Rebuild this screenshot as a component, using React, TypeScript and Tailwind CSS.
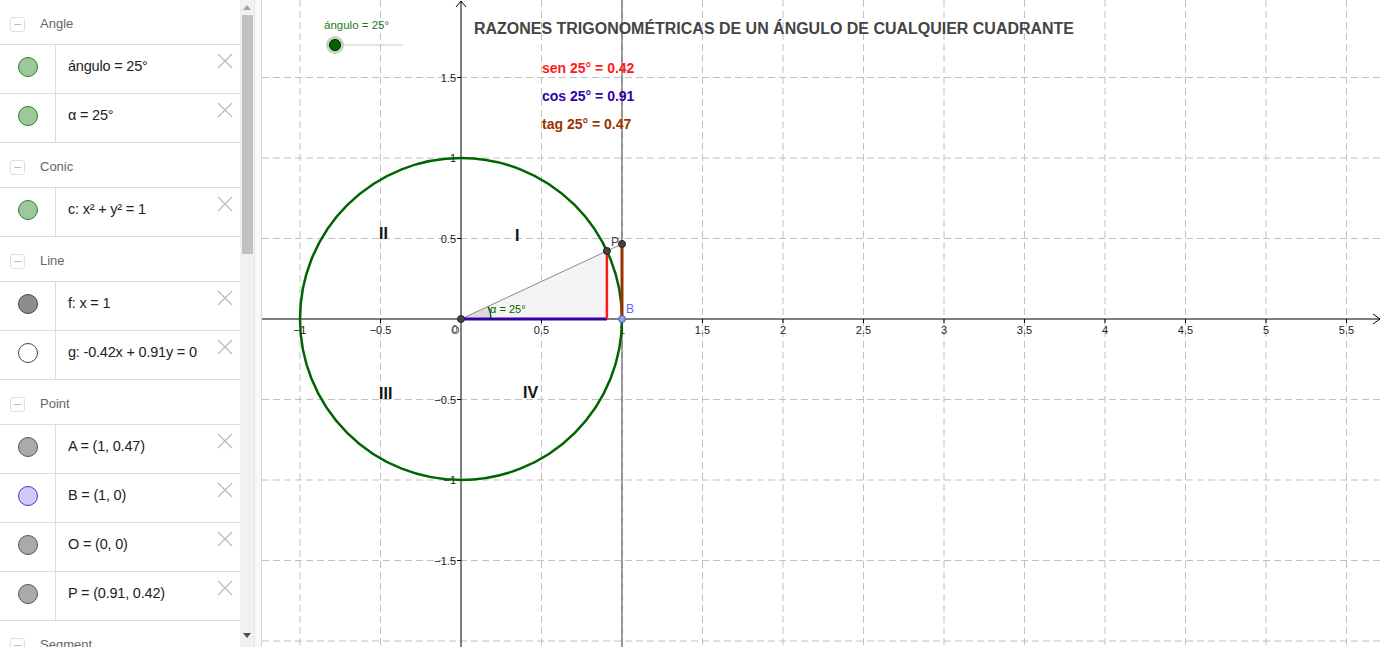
import React from 'react';

type Item = { label: React.ReactNode; fill: string; stroke: string };
type Group = { title: string; items: Item[] };

const groups: Group[] = [
  {
    title: 'Angle',
    items: [
      { label: 'ángulo = 25°', fill: '#9cc89c', stroke: '#2e7d2e' },
      { label: 'α = 25°', fill: '#9cc89c', stroke: '#2e7d2e' },
    ],
  },
  {
    title: 'Conic',
    items: [{ label: 'c: x² + y² = 1', fill: '#9cc89c', stroke: '#2e7d2e' }],
  },
  {
    title: 'Line',
    items: [
      { label: 'f: x = 1', fill: '#8c8c8c', stroke: '#444' },
      { label: 'g: -0.42x + 0.91y = 0', fill: '#ffffff', stroke: '#444' },
    ],
  },
  {
    title: 'Point',
    items: [
      { label: 'A = (1, 0.47)', fill: '#aaaaaa', stroke: '#555' },
      { label: 'B = (1, 0)', fill: '#ccccf6', stroke: '#5533cc' },
      { label: 'O = (0, 0)', fill: '#aaaaaa', stroke: '#555' },
      { label: 'P = (0.91, 0.42)', fill: '#aaaaaa', stroke: '#555' },
    ],
  },
  { title: 'Segment', items: [] },
];

function CloseIcon() {
  return (
    <svg width="16" height="16" viewBox="0 0 16 16" className="block">
      <path d="M1 1 L15 15 M15 1 L1 15" stroke="#bdbdbd" strokeWidth="1.4" fill="none" />
    </svg>
  );
}

function GroupHeader({ title }: { title: string }) {
  return (
    <div className="flex h-[45px] shrink-0 items-center border-b border-[#dddddd] pl-[10px] pt-[4px]">
      <div className="flex h-[15px] w-[15px] items-center justify-center rounded-[3px] border border-[#e0e0e0]">
        <div className="h-px w-[7px] bg-[#bbbbbb]" />
      </div>
      <span className="ml-[15px] text-[13px] text-[#666666]">{title}</span>
    </div>
  );
}

function ItemRow({ item }: { item: Item }) {
  return (
    <div className="relative flex h-[49px] shrink-0 border-b border-[#dddddd]">
      <div className="flex w-[56px] items-center justify-center border-r border-[#dddddd] pb-[4px]">
        <span
          className="h-[20px] w-[20px] rounded-full border"
          style={{ backgroundColor: item.fill, borderColor: item.stroke }}
        />
      </div>
      <div className="flex items-center pb-[4px] pl-[12px] text-[14.5px] tracking-[-0.2px] text-[#222222]">
        {item.label}
      </div>
      <div className="absolute right-[7px] top-[8px]">
        <CloseIcon />
      </div>
    </div>
  );
}

function Sidebar() {
  return (
    <div className="flex h-full w-[240px] shrink-0 flex-col overflow-hidden bg-white">
      {groups.map((g) => (
        <React.Fragment key={g.title}>
          <GroupHeader title={g.title} />
          {g.items.map((it, i) => (
            <ItemRow key={i} item={it} />
          ))}
        </React.Fragment>
      ))}
    </div>
  );
}

function Scrollbar() {
  return (
    <div className="flex h-full w-[14px] shrink-0 flex-col items-center bg-[#f1f1f1]">
      <div className="flex h-[15px] items-center justify-center">
        <div className="h-0 w-0 border-x-[4px] border-b-[5px] border-x-transparent border-b-[#a3a3a3]" />
      </div>
      <div className="h-[239px] w-[11px] bg-[#c1c1c1]" />
      <div className="flex-1" />
      <div className="flex h-[17px] items-center justify-center pb-[6px]">
        <div className="h-0 w-0 border-x-[4px] border-t-[5px] border-x-transparent border-t-[#505050]" />
      </div>
    </div>
  );
}

const OX = 461;
const OY = 319;
const U = 161;
const sx = (x: number) => OX + x * U;
const sy = (y: number) => OY - y * U;

function fmt(v: number) {
  const s = Math.abs(v).toString();
  return v < 0 ? '\u2212' + s : s;
}

function Graphics() {
  const a = (25 * Math.PI) / 180;
  const P = { x: sx(Math.cos(a)), y: sy(Math.sin(a)) };
  const A = { x: sx(1), y: sy(Math.tan(a)) };
  const B = { x: sx(1), y: sy(0) };
  const xs: number[] = [];
  for (let k = -2; k <= 11; k++) xs.push(k * 0.5);
  const ys: number[] = [];
  for (let k = -4; k <= 4; k++) if (k !== 0) ys.push(k * 0.5);
  const r = 30;
  const arcEnd = { x: OX + r * Math.cos(a), y: OY - r * Math.sin(a) };
  const font = '"Liberation Sans", Arial, sans-serif';

  return (
    <div className="relative h-full flex-1 overflow-hidden border-l border-[#d6d6d6] bg-white">
      <svg width="1120" height="647" viewBox="262 0 1120 647" className="block" style={{ fontFamily: font }}>
        {/* grid */}
        {xs.map((x) =>
          x === 0 ? null : (
            <line key={'gx' + x} x1={sx(x)} y1={0} x2={sx(x)} y2={647} stroke="#c0c0c0" strokeDasharray="7 4" />
          )
        )}
        {ys.map((y) => (
          <line key={'gy' + y} x1={262} y1={sy(y)} x2={1382} y2={sy(y)} stroke="#c0c0c0" strokeDasharray="7 4" />
        ))}

        {/* axes */}
        <line x1={262} y1={OY} x2={1380} y2={OY} stroke="#000" />
        <path d="M1373 314 L1380 319 L1373 324" stroke="#000" fill="none" />
        <line x1={OX} y1={1} x2={OX} y2={647} stroke="#000" />
        <path d="M456 7 L461 1 L466 7" stroke="#000" fill="none" />

        {/* axis labels */}
        {xs.map((x) =>
          x === 0 ? null : (
            <g key={'lx' + x}>
              <line x1={sx(x)} y1={OY} x2={sx(x)} y2={OY + 4} stroke="#000" />
              <text x={sx(x)} y={OY + 15} fontSize="11" textAnchor="middle" fill="#222">
                {fmt(x)}
              </text>
            </g>
          )
        )}
        {ys
          .filter((y) => Math.abs(y) < 2)
          .map((y) => (
            <g key={'ly' + y}>
              <line x1={OX - 4} y1={sy(y)} x2={OX} y2={sy(y)} stroke="#000" />
              <text x={OX - 5} y={sy(y) + 4} fontSize="11" textAnchor="end" fill="#222">
                {fmt(y)}
              </text>
            </g>
          ))}
        <text x={OX - 10} y={OY + 15} fontSize="11" fill="#555">O</text>
        <text x={OX - 9} y={OY + 14} fontSize="10" fill="#555">0</text>

        {/* f: x = 1 */}
        <line x1={sx(1)} y1={0} x2={sx(1)} y2={647} stroke="#444" strokeWidth="1" />

        {/* triangle */}
        <polygon points={`${OX},${OY} ${P.x},${P.y} ${P.x},${OY}`} fill="#f4f4f4" />
        <path d={`M${OX} ${OY} L${OX + r} ${OY} A${r} ${r} 0 0 0 ${arcEnd.x} ${arcEnd.y} Z`} fill="#dcdcdc" />
        <path d={`M${OX + r} ${OY} A${r} ${r} 0 0 0 ${arcEnd.x} ${arcEnd.y}`} fill="none" stroke="#006400" strokeWidth="1.5" />

        {/* g through O, P, A */}
        <line x1={OX} y1={OY} x2={A.x} y2={A.y} stroke="#8a8a8a" strokeWidth="1" />

        {/* circle */}
        <circle cx={OX} cy={OY} r={U} fill="none" stroke="#006400" strokeWidth="2.5" />

        {/* segments */}
        <line x1={OX} y1={OY} x2={P.x} y2={OY} stroke="#3300aa" strokeWidth="3" />
        <line x1={P.x} y1={P.y} x2={P.x} y2={OY} stroke="#ff1a1a" strokeWidth="2.5" />
        <line x1={B.x} y1={B.y} x2={A.x} y2={A.y} stroke="#993300" strokeWidth="3" />

        <text x={490} y={313} fontSize="11" fill="#006400">α = 25°</text>

        {/* points */}
        <circle cx={OX} cy={OY} r={3.5} fill="#444" stroke="#222" />
        <circle cx={P.x} cy={P.y} r={3.5} fill="#444" stroke="#222" />
        <circle cx={A.x} cy={A.y} r={3.5} fill="#444" stroke="#222" />
        <circle cx={B.x} cy={B.y} r={3.5} fill="#9999ee" stroke="#5555cc" />
        <text x={611} y={246} fontSize="12" fill="#444">P</text>
        <text x={626} y={313} fontSize="12" fill="#6666ee">B</text>

        {/* quadrant labels */}
        <text x={379} y={239} fontSize="16" fontWeight="bold" fill="#111">II</text>
        <text x={515} y={241} fontSize="16" fontWeight="bold" fill="#111">I</text>
        <text x={379} y={399} fontSize="16" fontWeight="bold" fill="#111">III</text>
        <text x={523} y={398} fontSize="16" fontWeight="bold" fill="#111">IV</text>

        {/* title and ratios */}
        <text x={474} y={34} fontSize="16" fontWeight="bold" fill="#444" textLength="600" lengthAdjust="spacingAndGlyphs">
          RAZONES TRIGONOMÉTRICAS DE UN ÁNGULO DE CUALQUIER CUADRANTE
        </text>
        <text x={542} y={73} fontSize="14" fontWeight="bold" fill="#ff1a1a">sen 25° = 0.42</text>
        <text x={542} y={101} fontSize="14" fontWeight="bold" fill="#3300aa">cos 25° = 0.91</text>
        <text x={542} y={129} fontSize="14" fontWeight="bold" fill="#993300">tag 25° = 0.47</text>

        {/* slider */}
        <text x={324} y={29} fontSize="11.5" fill="#1a7a1a">ángulo = 25°</text>
        <line x1={335} y1={45} x2={403} y2={45} stroke="#b9d3b9" strokeWidth="1.2" />
        <circle cx={335} cy={45} r={9} fill="#bcd8bc" />
        <circle cx={335} cy={45} r={5.5} fill="#006400" stroke="#111" strokeWidth="1" />
      </svg>
    </div>
  );
}

export default function App() {
  return (
    <div
      className="flex h-[647px] w-[1382px] overflow-hidden bg-white"
      style={{ fontFamily: '"Liberation Sans", Arial, sans-serif' }}
    >
      <Sidebar />
      <Scrollbar />
      <div className="h-full w-[7px] shrink-0 border-l border-[#e6e6e6] bg-[#f8f8f8]" />
      <Graphics />
    </div>
  );
}
